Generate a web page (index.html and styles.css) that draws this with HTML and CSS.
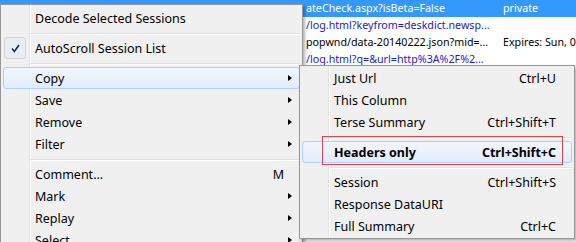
FILE: index.html
```html
<!DOCTYPE html>
<html lang="en">
<head>
    <meta charset="UTF-8">
    <title>Session context menu</title>
    <link rel="stylesheet" href="styles.css">
</head>
<body>
    <main class="screen">
        <!-- session list behind the menus -->
        <section class="list">
            <div class="row selected">
                <span class="url">ateCheck.aspx?isBeta=False</span>
                <span class="caching">private</span>
            </div>
            <div class="row link">
                <span class="url">/log.html?keyfrom=deskdict.newsp...</span>
                <span class="caching"></span>
            </div>
            <div class="row">
                <span class="url">popwnd/data-20140222.json?mid=...</span>
                <span class="caching">Expires: Sun, 0</span>
            </div>
            <div class="row link">
                <span class="url">/log.html?q=&amp;url=http%3A%2F%2...</span>
                <span class="caching"></span>
            </div>
        </section>

        <ul class="menu main-menu">
            <li class="item"><span class="label">Decode Selected Sessions</span></li>
            <li class="separator"></li>
            <li class="item checked">
                <span class="check">
                    <svg width="9" height="9" viewBox="0 0 9 9"><path d="M1 4.6 L3.4 7.4 L8 1" fill="none" stroke="#18206a" stroke-width="1.6"/></svg>
                </span>
                <span class="label">AutoScroll Session List</span>
            </li>
            <li class="separator"></li>
            <li class="item active"><span class="label">Copy</span><span class="key"></span><span class="arrow"></span></li>
            <li class="item"><span class="label">Save</span><span class="key"></span><span class="arrow"></span></li>
            <li class="item"><span class="label">Remove</span><span class="key"></span><span class="arrow"></span></li>
            <li class="item"><span class="label">Filter</span><span class="key"></span><span class="arrow"></span></li>
            <li class="separator"></li>
            <li class="item"><span class="label">Comment...</span><span class="key">M</span></li>
            <li class="item"><span class="label">Mark</span><span class="key"></span><span class="arrow"></span></li>
            <li class="item"><span class="label">Replay</span><span class="key"></span><span class="arrow"></span></li>
            <li class="item"><span class="label">Select</span><span class="key"></span><span class="arrow"></span></li>
        </ul>

        <ul class="menu sub-menu">
            <li class="item"><span class="label">Just Url</span><span class="key">Ctrl+U</span></li>
            <li class="item"><span class="label">This Column</span></li>
            <li class="item"><span class="label">Terse Summary</span><span class="key">Ctrl+Shift+T</span></li>
            <li class="separator"></li>
            <li class="item active bold"><span class="label">Headers only</span><span class="key">Ctrl+Shift+C</span></li>
            <li class="separator"></li>
            <li class="item"><span class="label">Session</span><span class="key">Ctrl+Shift+S</span></li>
            <li class="item"><span class="label">Response DataURI</span></li>
            <li class="item"><span class="label">Full Summary</span><span class="key">Ctrl+C</span></li>
        </ul>

        <div class="callout"></div>
    </main>
</body>
</html>
```

FILE: styles.css
```css
:root{
    --menu-bg: #f0f0f0;
    --menu-border: #979797;
    --gutter-line: #e2e3e3;
    --hover-border: #aecff7;
    --select-blue: #3399ff;
    --link-blue: #1a1ad0;
    --red: #e0424a;
}
*,*::before,*::after{
    box-sizing: border-box;
    margin: 0;
    padding: 0;
}
body{
    background: #fff;
    font-family: "Noto Sans", "Open Sans", sans-serif;
    font-size: 12.5px;
    color: #000;
}
.screen{
    position: relative;
    width: 576px;
    height: 242px;
    overflow: hidden;
}

/* list */
.list{
    display: flex;
    flex-direction: column;
    font-size: 10.7px;
}
.row{
    display: grid;
    grid-template-columns: 197px minmax(0, 1fr);
    height: 17px;
    line-height: 17px;
    padding-left: 306px;
    white-space: nowrap;
}
.row span{
    overflow: hidden;
}
.row.selected{
    background: var(--select-blue);
    color: #fff;
}
.row.link{
    color: var(--link-blue);
}

/* menus */
.menu{
    position: absolute;
    list-style: none;
    border: 1px solid var(--menu-border);
    background: linear-gradient(to right, var(--menu-bg) 28px, var(--gutter-line) 28px 29px, #fff 29px 30px, var(--menu-bg) 30px);
    box-shadow: 2px 2px 3px rgba(0,0,0,.3);
}
.main-menu{
    left: 0;
    top: 4px;
    width: 303px;
    height: 260px;
    padding: 2px;
}
.sub-menu{
    left: 299px;
    top: 65px;
    width: 276px;
    padding: 1px 2px;
}
.item{
    position: relative;
    display: grid;
    grid-template-columns: 1fr auto 16px;
    align-items: center;
    height: 22px;
    padding-left: 32px;
    border: 1px solid transparent;
    border-radius: 3px;
    white-space: nowrap;
}
.item .label{
    margin-left: -1px;
}
.item.active{
    background: linear-gradient(#f1f6fd, #e2edfa);
    border-color: var(--hover-border);
}
.item.bold{
    font-weight: 700;
}
.key{
    margin-right: -1px;
}
.arrow{
    justify-self: start;
    margin-left: 5px;
    width: 0;
    height: 0;
    border-left: 4px solid #000;
    border-top: 3.5px solid transparent;
    border-bottom: 3.5px solid transparent;
}
.check{
    position: absolute;
    left: 0;
    top: -1px;
    width: 22px;
    height: 22px;
    display: flex;
    align-items: center;
    justify-content: center;
    border: 1px solid #cdd3da;
    border-radius: 3px;
    background: #e9eef4;
}
.separator{
    height: 8px;
    margin-left: 27px;
    padding-top: 4px;
}
.separator::before{
    content: "";
    display: block;
    height: 2px;
    border-top: 1px solid var(--gutter-line);
    border-bottom: 1px solid #fff;
}

/* red highlight box drawn over the menu */
.callout{
    position: absolute;
    left: 322px;
    top: 136px;
    width: 241px;
    height: 29px;
    border: 1px solid var(--red);
}
```
